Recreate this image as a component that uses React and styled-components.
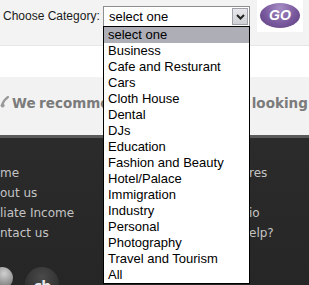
import React from 'react';
import styled, { createGlobalStyle } from 'styled-components';

const GlobalStyle = createGlobalStyle`
  html, body {
    margin: 0;
    padding: 0;
    width: 309px;
    height: 285px;
    overflow: hidden;
    background: #ffffff;
  }
`;

const categories = [
  'select one',
  'Business',
  'Cafe and Resturant',
  'Cars',
  'Cloth House',
  'Dental',
  'DJs',
  'Education',
  'Fashion and Beauty',
  'Hotel/Palace',
  'Immigration',
  'Industry',
  'Personal',
  'Photography',
  'Travel and Tourism',
  'All',
];

const leftLinks = ['me', 'out us', 'liate Income', 'ntact us'];
const rightLinks = ['res', '', 'io', 'elp?'];

const Page = styled.div`
  width: 309px;
  height: 285px;
  display: flex;
  flex-direction: column;
  overflow: hidden;
`;

const SearchBar = styled.div`
  display: flex;
  align-items: flex-start;
  height: 45px;
  padding-left: 3px;
  background: #f3f3f3;
  border-bottom: 1px solid #e6e6e6;
`;

const Label = styled.span`
  margin-top: 9px;
  font-family: 'Liberation Sans', Arial, sans-serif;
  font-size: 12px;
  color: #1a1a1a;
  width: 100px;
`;

const SelectWrap = styled.div`
  position: relative;
  margin-top: 6px;
  width: 147px;
`;

const SelectBox = styled.div`
  display: flex;
  align-items: center;
  justify-content: space-between;
  box-sizing: border-box;
  height: 21px;
  padding: 0 1px 0 5px;
  background: #ffffff;
  border: 1px solid #8e8e8e;
  font-family: 'Liberation Sans', Arial, sans-serif;
  font-size: 13px;
  color: #000;
`;

const ArrowButton = styled.div`
  display: flex;
  align-items: center;
  justify-content: center;
  box-sizing: border-box;
  width: 16px;
  height: 17px;
  background: linear-gradient(#e8e8ec, #cfd0d6);
  border: 1px solid #a0a2aa;
`;

const Dropdown = styled.ul`
  position: absolute;
  top: 20px;
  left: 0;
  z-index: 5;
  box-sizing: border-box;
  width: 147px;
  margin: 0;
  padding: 0;
  list-style: none;
  background: #ffffff;
  border: 1px solid #000000;
`;

const Option = styled.li`
  height: 16px;
  line-height: 16px;
  padding-left: 4px;
  font-family: 'Liberation Sans', Arial, sans-serif;
  font-size: 13px;
  color: #000;
  background: ${({ selected }) => (selected ? '#aeaeb7' : 'transparent')};
  white-space: nowrap;
`;

const GoWrap = styled.div`
  display: flex;
  align-items: center;
  justify-content: center;
  width: 46px;
  height: 32px;
  margin-left: 7px;
  background: #ffffff;
`;

const GoButton = styled.div`
  display: flex;
  align-items: center;
  justify-content: center;
  width: 40px;
  height: 25px;
  margin-top: -2px;
  border-radius: 50%;
  background: radial-gradient(ellipse at 50% 20%, #a68cc4 0%, #7a5a9e 55%, #5c3c7e 100%);
  color: #ffffff;
  font-family: 'Liberation Sans', Arial, sans-serif;
  font-size: 14px;
  font-weight: bold;
  font-style: italic;
`;

const Spacer = styled.div`
  height: 31px;
  background: #ffffff;
`;

const RecommendBar = styled.div`
  display: flex;
  align-items: flex-start;
  gap: 3px;
  height: 58px;
  padding: 18px 0 0 0;
  box-sizing: border-box;
  background: #f2f2f2;
  white-space: nowrap;

  svg {
    flex-shrink: 0;
    margin-top: 1px;
  }
`;

const RecommendText = styled.span`
  font-family: 'DejaVu Sans', Verdana, sans-serif;
  font-size: 13.5px;
  font-weight: bold;
  word-spacing: -1.2px;
  color: #7b7b7b;
`;

const Footer = styled.div`
  flex: 1;
  display: flex;
  flex-direction: column;
  background: linear-gradient(#5a5a5a 0, #5a5a5a 3px, #2b2b2b 3px, #262626 100%);
  overflow: hidden;
`;

const LinkColumns = styled.div`
  display: flex;
  padding-top: 28px;
`;

const LinkList = styled.ul`
  width: ${({ width }) => width}px;
  margin: 0;
  padding: 0;
  list-style: none;
`;

const LinkItem = styled.li`
  height: 20px;
  line-height: 20px;
  font-family: 'DejaVu Sans', Verdana, sans-serif;
  font-size: 12px;
  color: #c4c4c4;
  white-space: nowrap;
`;

const SocialRow = styled.div`
  display: flex;
  gap: 12px;
  margin-top: 24px;
  margin-left: -9px;
`;

const SocialIcon = styled.div`
  width: ${({ size }) => size}px;
  height: ${({ size }) => size}px;
  flex-shrink: 0;
  border-radius: 50%;
  background: ${({ tone }) =>
    tone === 'light'
      ? 'radial-gradient(circle at 60% 30%, #d0d0d0, #7a7a7a 70%)'
      : 'radial-gradient(circle at 50% 30%, #4a4a4a, #2e2e2e 70%)'};
  display: flex;
  justify-content: center;
  padding-top: 11px;
  box-sizing: border-box;
`;

const SocialMark = styled.span`
  font-family: 'DejaVu Sans', sans-serif;
  font-size: 14px;
  font-weight: bold;
  color: #e8e8e8;
  letter-spacing: -1px;
`;

const Chevron = () => (
  <svg width="9" height="6" viewBox="0 0 9 6">
    <path d="M1 1 L4.5 4.5 L8 1" fill="none" stroke="#222" strokeWidth="2" />
  </svg>
);

const QuoteMark = () => (
  <svg width="9" height="12" viewBox="0 0 9 12">
    <path d="M8 1 C5 3 3 6 2 9" fill="none" stroke="#9a9a9a" strokeWidth="2.2" strokeLinecap="round" />
    <circle cx="2.6" cy="9.4" r="2" fill="#9a9a9a" />
  </svg>
);

export default function App() {
  return (
    <>
      <GlobalStyle />
      <Page>
        <SearchBar>
          <Label>Choose Category:</Label>
          <SelectWrap>
            <SelectBox>
              select one
              <ArrowButton>
                <Chevron />
              </ArrowButton>
            </SelectBox>
            <Dropdown>
              {categories.map((c, i) => (
                <Option key={c} selected={i === 0}>
                  {c}
                </Option>
              ))}
            </Dropdown>
          </SelectWrap>
          <GoWrap>
            <GoButton>GO</GoButton>
          </GoWrap>
        </SearchBar>
        <Spacer />
        <RecommendBar>
          <QuoteMark />
          <RecommendText>We recommend these if you are looking for</RecommendText>
        </RecommendBar>
        <Footer>
          <LinkColumns>
            <LinkList width={249}>
              {leftLinks.map(l => (
                <LinkItem key={l}>{l}</LinkItem>
              ))}
            </LinkList>
            <LinkList width={60}>
              {rightLinks.map((l, i) => (
                <LinkItem key={i}>{l}</LinkItem>
              ))}
            </LinkList>
          </LinkColumns>
          <SocialRow>
            <SocialIcon size={22} tone="light" />
            <SocialIcon size={34} tone="dark">
              <SocialMark>cb</SocialMark>
            </SocialIcon>
          </SocialRow>
        </Footer>
      </Page>
    </>
  );
}
